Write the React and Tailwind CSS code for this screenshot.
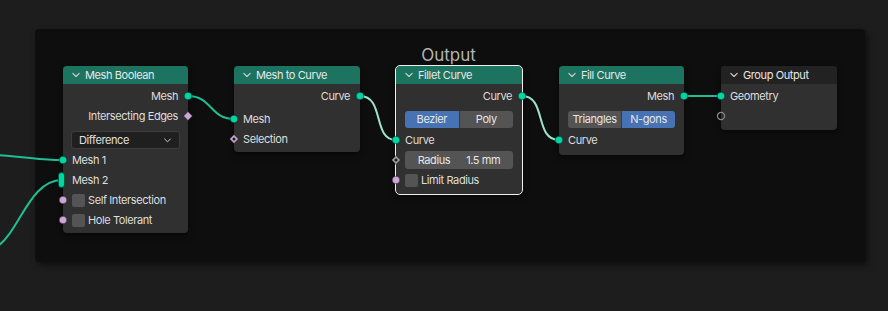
import React from "react";

const GEO = "#00d6a3";
const BOOL = "#cca6d6";
const FLOAT = "#a1a1a1";

// socket glyph, centred on the node edge
const Socket = ({ side, kind = "circle", color = GEO }) => {
  const pos = side === "left" ? "left-[-5px]" : "right-[-5px]";
  if (kind === "multi") {
    return (
      <span className={`absolute ${pos} top-1/2 -translate-y-1/2 w-[7px] h-[16px] rounded-full border border-black/60`} style={{ background: color }} />
    );
  }
  return (
    <svg className={`absolute ${pos} top-1/2 -translate-y-1/2`} width="10" height="10" viewBox="0 0 10 10">
      {kind === "circle" && <circle cx="5" cy="5" r="3.8" fill={color} stroke="#000" strokeOpacity="0.5" strokeWidth="0.8" />}
      {kind === "empty" && <circle cx="5" cy="5" r="3.6" fill="none" stroke="#8a8a8a" strokeWidth="1.2" />}
      {kind === "diamond" && <path d="M5 0.6 L9.4 5 L5 9.4 L0.6 5 Z" fill={color} stroke="#000" strokeOpacity="0.5" strokeWidth="0.8" />}
      {kind === "field" && (
        <>
          <path d="M5 0.6 L9.4 5 L5 9.4 L0.6 5 Z" fill={color} stroke="#000" strokeOpacity="0.5" strokeWidth="0.8" />
          <circle cx="5" cy="5" r="1.5" fill="#1a1a1a" />
        </>
      )}
    </svg>
  );
};

const Chevron = ({ size = 9 }) => (
  <svg width={size} height={size} viewBox="0 0 10 10" className="shrink-0">
    <path d="M1.8 3.3 L5 6.5 L8.2 3.3" fill="none" stroke="#d0d0d0" strokeWidth="1.1" strokeLinecap="round" strokeLinejoin="round" />
  </svg>
);

const Header = ({ title, dark }) => (
  <div className={`h-[18px] flex items-center gap-[4px] pl-[8px] rounded-t-[4px] ${dark ? "bg-[#222222]" : "bg-[#1c7360]"}`}>
    <Chevron size={10} />
    <span className="text-[11px] text-[#e8e8e8] leading-none">{title}</span>
  </div>
);

const Out = ({ label, kind, color }) => (
  <div className="relative h-5 flex items-center justify-end pr-[10px] text-[#dedede]">
    {label}
    <Socket side="right" kind={kind} color={color} />
  </div>
);

const In = ({ label, kind, color, check }) => (
  <div className="relative h-5 flex items-center pl-[9px] text-[#dedede]">
    {check && <span className="w-[13px] h-[13px] rounded-[2px] bg-[#545454] mr-[3px]" />}
    {label}
    <Socket side="left" kind={kind} color={color} />
  </div>
);

const Node = ({ x, y, w, children, selected }) => (
  <div
    className={`absolute rounded-[4px] bg-[#303030] shadow-[0_2px_6px_rgba(0,0,0,0.6)] ${selected ? "outline outline-1 outline-[#f0f0f0]" : ""}`}
    style={{ left: x, top: y, width: w }}
  >
    {children}
  </div>
);

const Toggle = ({ a, b, active }) => (
  <div className="flex h-[17px] mx-[9px] rounded-[3px] overflow-hidden text-[#e6e6e6]">
    <div className={`flex-1 flex items-center justify-center ${active === 0 ? "bg-[#4772b3]" : "bg-[#545454]"}`}>{a}</div>
    <div className={`flex-1 flex items-center justify-center border-l border-[#3a3a3a] ${active === 1 ? "bg-[#4772b3]" : "bg-[#545454]"}`}>{b}</div>
  </div>
);

export default function App() {
  return (
    <div className="relative w-[888px] h-[311px] bg-[#1d1d1d] overflow-hidden text-[11px] leading-none tracking-[-0.4px]" style={{ fontFamily: "Inter, 'DejaVu Sans', sans-serif" }}>
      {/* frame */}
      <div className="absolute left-[35px] top-[29px] w-[830px] h-[233px] rounded-[4px] bg-[#0e0e0e] shadow-[3px_3px_6px_rgba(0,0,0,0.5)]">
        <div className="text-center text-[17px] tracking-normal text-[#b4b4b4] mt-[18px] ml-[-3px]">Output</div>
      </div>

      {/* wires */}
      <svg className="absolute inset-0" width="888" height="311" fill="none" strokeLinecap="round">
        <path d="M-2 155 C 30 157, 40 160, 62 160" stroke="#1fbf93" strokeWidth="2" />
        <path d="M-2 246 C 20 230, 30 180, 62 180" stroke="#1fbf93" strokeWidth="2" />
        <path d="M188 96 C 212 96, 210 119, 234 119" stroke="#1fbf93" strokeWidth="2" />
        <path d="M360 96 C 385 96, 372 140, 396 140" stroke="#9ee3cb" strokeWidth="2" />
        <path d="M522 96 C 547 96, 534 140, 559 140" stroke="#9ee3cb" strokeWidth="2" />
        <path d="M684 96 L 721 96" stroke="#1fbf93" strokeWidth="2" />
      </svg>

      {/* Mesh Boolean */}
      <Node x={63} y={66} w={125}>
        <Header title="Mesh Boolean" />
        <div className="pt-[2px] pb-[3px]">
          <Out label="Mesh" />
          <Out label="Intersecting Edges" kind="diamond" color={BOOL} />
          <div className="pt-[5px] pb-[1px] px-[8px]">
            <div className="h-[18px] flex items-center justify-between px-[7px] rounded-[3px] bg-[#1f1f1f] border border-[#3c3c3c] text-[#e0e0e0]">
              <span>Difference</span>
              <Chevron />
            </div>
          </div>
          <In label="Mesh 1" />
          <In label="Mesh 2" kind="multi" />
          <In label="Self Intersection" color={BOOL} check />
          <In label="Hole Tolerant" color={BOOL} check />
        </div>
      </Node>

      {/* Mesh to Curve */}
      <Node x={234} y={66} w={126}>
        <Header title="Mesh to Curve" />
        <div className="pt-[2px] pb-[3px]">
          <Out label="Curve" />
          <div className="h-[3px]" />
          <In label="Mesh" />
          <In label="Selection" kind="field" color={BOOL} />
        </div>
      </Node>

      {/* Fillet Curve */}
      <Node x={396} y={66} w={126} selected>
        <Header title="Fillet Curve" />
        <div className="pt-[2px] pb-[4px]">
          <Out label="Curve" />
          <div className="pt-[5px] pb-[2px]">
            <Toggle a="Bezier" b="Poly" active={0} />
          </div>
          <In label="Curve" />
          <div className="relative pt-[1px] pb-[1px]">
            <div className="h-[18px] mx-[9px] flex items-center justify-center gap-[16px] rounded-[3px] bg-[#545454] text-[#e6e6e6]">
              <span>Radius</span>
              <span>1.5 mm</span>
            </div>
            <Socket side="left" kind="field" color={FLOAT} />
          </div>
          <In label="Limit Radius" color={BOOL} check />
        </div>
      </Node>

      {/* Fill Curve */}
      <Node x={559} y={66} w={125}>
        <Header title="Fill Curve" />
        <div className="pt-[2px] pb-[5px]">
          <Out label="Mesh" />
          <div className="pt-[5px] pb-[2px]">
            <Toggle a="Triangles" b="N-gons" active={1} />
          </div>
          <In label="Curve" />
        </div>
      </Node>

      {/* Group Output */}
      <Node x={721} y={66} w={116}>
        <Header title="Group Output" dark />
        <div className="pt-[2px] pb-[4px]">
          <In label="Geometry" />
          <In label="" kind="empty" />
        </div>
      </Node>
    </div>
  );
}
